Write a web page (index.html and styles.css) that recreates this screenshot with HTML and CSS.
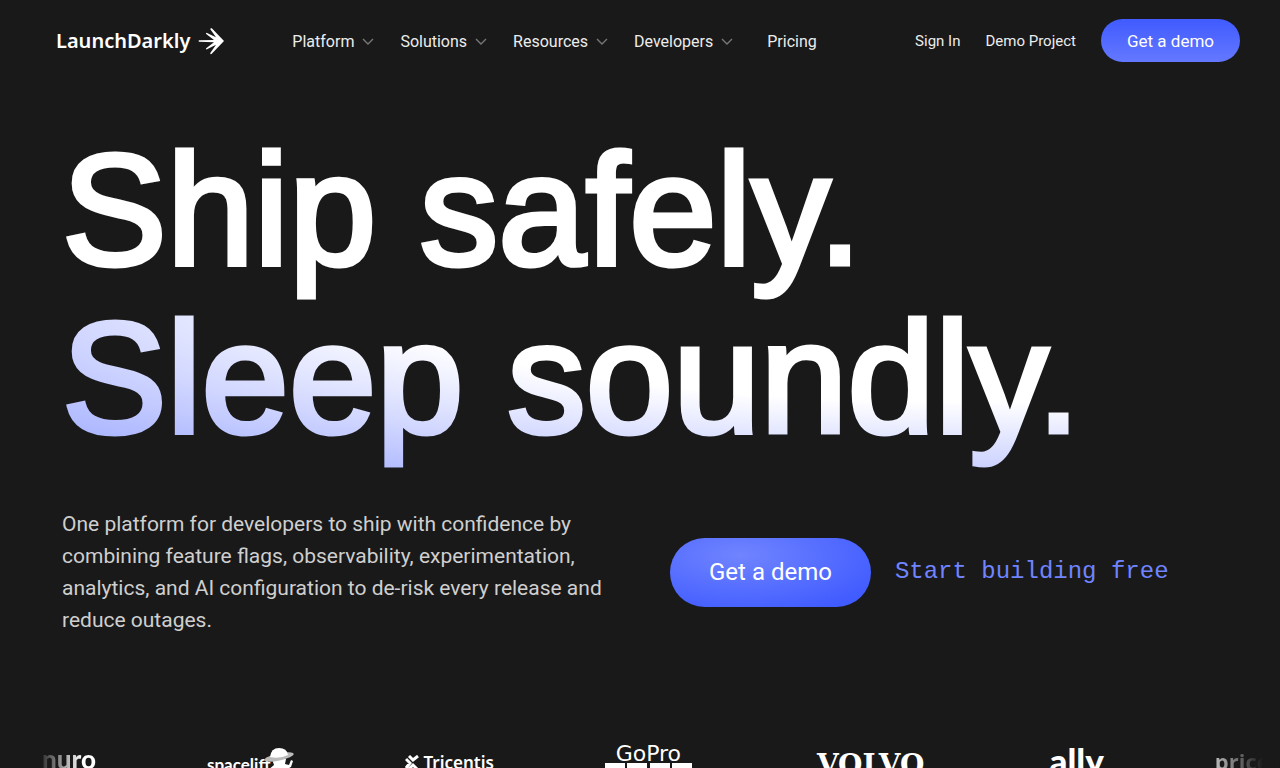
FILE: index.html
```html
<!DOCTYPE html>
<html lang="en">
<head>
<meta charset="utf-8">
<meta name="viewport" content="width=device-width, initial-scale=1">
<title>LaunchDarkly</title>
<link rel="stylesheet" href="styles.css">
</head>
<body>
<header class="site-header">
  <a class="brand" href="#">
    <span>LaunchDarkly</span>
    <svg class="brand-mark" viewBox="0 0 26 28" aria-hidden="true">
      <path d="M26 14 13.500 27Q12 27.500 12.300 26L18 17.800 8.500 22.500Q7.500 22 8.200 21.200L16 15.200 1 14.800Q0 14 1 13.300L16 12.900 8.200 6.900Q7.500 6 8.500 5.700L18 10.200 12.300 2.200Q12.300 .8 13.800 1.300Z"/>
    </svg>
  </a>
  <nav class="main-nav" aria-label="Main">
    <button class="nav-item" type="button">Platform <svg class="chevron" viewBox="0 0 12 7" aria-hidden="true"><path d="M1 1l5 5 5-5"/></svg></button>
    <button class="nav-item" type="button">Solutions <svg class="chevron" viewBox="0 0 12 7" aria-hidden="true"><path d="M1 1l5 5 5-5"/></svg></button>
    <button class="nav-item" type="button">Resources <svg class="chevron" viewBox="0 0 12 7" aria-hidden="true"><path d="M1 1l5 5 5-5"/></svg></button>
    <button class="nav-item" type="button">Developers <svg class="chevron" viewBox="0 0 12 7" aria-hidden="true"><path d="M1 1l5 5 5-5"/></svg></button>
    <a class="nav-item nav-link" href="#">Pricing</a>
  </nav>
  <div class="account">
    <a class="account-link" href="#">Sign In</a>
    <a class="account-link" href="#">Demo Project</a>
    <a class="button button-small" href="#">Get a demo</a>
  </div>
</header>
<main class="hero">
  <h1 class="headline"><span class="line">Ship safely.</span><span class="line line-glow">Sleep soundly.</span></h1>
  <div class="pitch">
    <p class="lead">One platform for developers to ship with confidence by combining feature flags, observability, experimentation, analytics, and AI configuration to de-risk every release and reduce outages.</p>
    <div class="actions">
      <a class="button button-large" href="#">Get a demo</a>
      <a class="free-link" href="#">Start building free</a>
    </div>
  </div>
</main>
<section class="logos" aria-label="Customers">
  <span class="logo nuro">nuro</span>
  <span class="logo spacelift">spacelift<svg class="astronaut" viewBox="0 0 30 26" aria-hidden="true">
    <path d="M8 12h14l-1 5 4 1 2-5 2 1-2 6-6 3v3H9l-5-3 6-5z" fill="#fff"/>
    <ellipse cx="15" cy="10" rx="15" ry="3.500" fill="#bbb" transform="rotate(-12 15 10)"/>
    <path d="M6 10Q7 1 15 1t9 7Q16 12 6 10Z" fill="#fff"/>
  </svg></span>
  <span class="logo tricentis"><svg class="tri-mark" viewBox="0 0 14 16" aria-hidden="true"><path d="M4 1l4 4 5-4M1 4l4 4-4 5M12 14L8 10l-5 5" fill="none" stroke="#fff" stroke-width="3"/></svg>Tricentis</span>
  <span class="logo gopro">GoPro<svg class="gopro-bars" viewBox="0 0 87 20" aria-hidden="true"><path d="M0 0h20v20H0zM22 0h20v20H22zM45 0h20v20H45zM67 0h20v20H67z" fill="#fff"/></svg></span>
  <span class="logo volvo">VOLVO</span>
  <span class="logo ally">ally</span>
  <span class="logo priceline">priceline</span>
</section>
</body>
</html>
```
FILE: styles.css
```css
* { box-sizing: border-box; }
html { scrollbar-width: none; }
body {
  margin: 0;
  background: #191919;
  color: #fff;
  font-family: Roboto, "Liberation Sans", sans-serif;
  overflow-x: hidden;
}
a { color: inherit; text-decoration: none; }

.site-header {
  display: flex;
  align-items: center;
  padding: 19px 40px 0 56px;
}
.brand {
  display: flex;
  align-items: center;
  gap: 8px;
  font: 600 20px/28px "Noto Sans", sans-serif;
}
.brand-mark { width: 26px; height: 28px; fill: #fff; }
.main-nav {
  display: flex;
  gap: 26px;
  margin-left: 68px;
  padding-top: 2px;
}
.nav-item {
  display: flex;
  align-items: center;
  gap: 8px;
  padding: 0;
  border: 0;
  background: none;
  color: #ececec;
  font: 400 16px/24px Roboto, sans-serif;
}
.nav-link { margin-left: 8px; }
.chevron {
  width: 12px;
  height: 7px;
  fill: none;
  stroke: #777;
  stroke-width: 1.4;
}
.account {
  display: flex;
  align-items: center;
  gap: 25px;
  margin-left: auto;
}
.account-link { color: #ececec; font-size: 15px; line-height: 24px; }
.button {
  display: flex;
  align-items: center;
  justify-content: center;
  border-radius: 40px;
  white-space: nowrap;
}
.button-small {
  height: 43px;
  padding: 0 26px;
  background: linear-gradient(#405bff, #6478ff);
  font-size: 17px;
}

.hero { padding: 64px 62px 0; }
.headline {
  margin: 0;
  font: 400 157px/168px "Liberation Sans", sans-serif;
}
.line {
  display: block;
  width: fit-content;
  white-space: nowrap;
  -webkit-text-stroke: 5px #fff;
}
.line-glow {
  padding-bottom: 20px;
  background: radial-gradient(1500px 270px at 90% 0, #fff 40%, #aab5ff 80%);
  background-clip: text;
  -webkit-background-clip: text;
  color: transparent;
  -webkit-text-stroke-color: transparent;
}
.pitch {
  display: grid;
  grid-template-columns: 560px 1fr;
  gap: 48px;
  align-items: center;
  margin-top: 26px;
}
.lead {
  margin: 0;
  color: #cfcfcf;
  font-size: 21px;
  line-height: 32px;
}
.actions { display: flex; align-items: center; gap: 24px; }
.button-large {
  height: 69px;
  padding: 0 39px;
  background: radial-gradient(ellipse at 35% 25%, #7084ff, #405bff 85%);
  font-size: 24px;
}
.free-link {
  color: #7084ff;
  font: 400 24px/32px "Liberation Mono", monospace;
  white-space: nowrap;
}

.logos {
  display: flex;
  gap: 111px;
  align-items: flex-start;
  height: 70px;
  margin-top: 109px;
  padding-left: 42px;
  overflow: hidden;
}
.logo { display: flex; flex: none; line-height: 32px; }
.nuro {
  font: 900 26px/28px Lato, sans-serif;
  background: linear-gradient(90deg, #333, #fff 75%);
  background-clip: text;
  -webkit-background-clip: text;
  color: transparent;
}
.spacelift { font: 700 17px/40px Lato, sans-serif; }
.astronaut { width: 30px; height: 26px; margin-top: 2px; margin-left: -6px; }
.tricentis { align-items: center; gap: 4px; font: 600 17px/36px "Noto Sans", sans-serif; }
.tri-mark { width: 14px; height: 16px; }
.gopro {
  flex-direction: column;
  align-items: center;
  font: 400 22px/18px "DejaVu Sans", sans-serif;
}
.gopro-bars { width: 87px; height: 20px; }
.volvo { padding: 0 14px; font: 700 28px/40px "DejaVu Serif", serif; }
.ally { font: 900 35px/30px Lato, sans-serif; }
.priceline {
  width: 62px;
  font: 700 22px/32px "Open Sans", sans-serif;
  background: linear-gradient(90deg, #bbb, #191919 48px);
  background-clip: text;
  -webkit-background-clip: text;
  color: transparent;
}
```
